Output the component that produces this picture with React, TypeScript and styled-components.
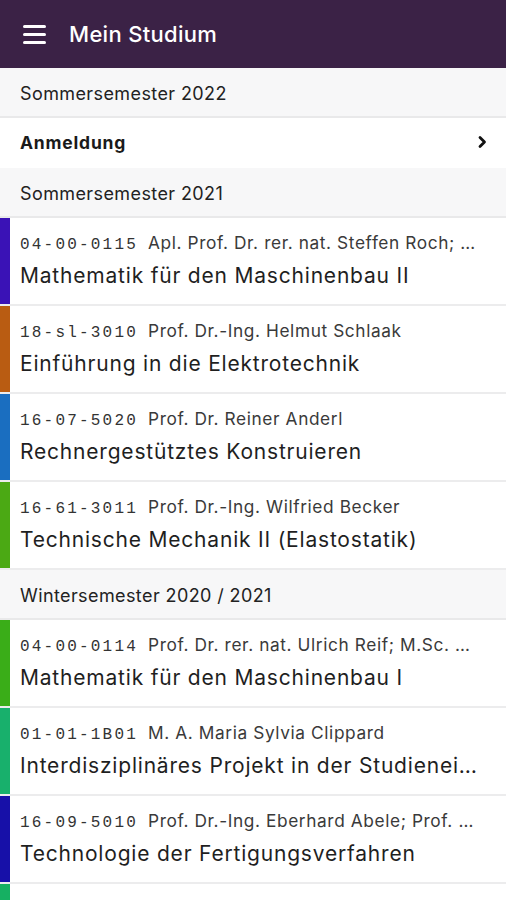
import React from "react";
import styled, { createGlobalStyle } from "styled-components";

const Global = createGlobalStyle`
  html, body { margin: 0; padding: 0; background: #ffffff; }
  body { font-family: Inter, "Noto Sans", sans-serif; -webkit-font-smoothing: antialiased; }
`;

const Page = styled.div`
  width: 506px;
  height: 900px;
  overflow: hidden;
  background: #ffffff;
`;

const Header = styled.header`
  height: 68px;
  background: #3b2246;
  display: flex;
  align-items: center;
  padding-left: 23px;
  gap: 23px;
  box-sizing: border-box;
`;

const Burger = styled.div`
  width: 23px;
  display: flex;
  flex-direction: column;
  gap: 5px;
  span {
    display: block;
    height: 3px;
    border-radius: 1.5px;
    background: #ffffff;
  }
`;

const Title = styled.h1`
  margin: 0;
  color: #ffffff;
  font-size: 22px;
  font-weight: 500;
  letter-spacing: 0.3px;
`;

const SectionHeader = styled.div`
  height: 50px;
  background: #f7f7f8;
  border-bottom: 2px solid #e9e9ea;
  display: flex;
  align-items: center;
  padding-left: 20px;
  font-size: 18px;
  letter-spacing: 0.4px;
  color: #222;
  box-sizing: border-box;
  padding-top: 2px;
`;

const LinkRow = styled.div`
  height: 50px;
  display: flex;
  align-items: center;
  justify-content: space-between;
  padding: 0 19px 2px 20px;
  font-size: 17.5px;
  letter-spacing: 0.8px;
  font-weight: 700;
  color: #1a1a1a;
  box-sizing: border-box;
  background: #fff;
`;

const Row = styled.div`
  display: flex;
  height: 88px;
  border-bottom: 2px solid #ececed;
  box-sizing: border-box;
`;

const Stripe = styled.div<{ $color: string }>`
  width: 10px;
  flex: none;
  background: ${(p) => p.$color};
`;

const Content = styled.div`
  flex: 1;
  min-width: 0;
  padding: 14px 20px 0 10px;
  display: flex;
  flex-direction: column;
  gap: 9px;
`;

const Meta = styled.div`
  display: flex;
  align-items: baseline;
  gap: 10px;
  white-space: nowrap;
  overflow: hidden;
  padding-right: 10px;
`;

const Code = styled.span`
  font-family: "Liberation Mono", monospace;
  font-size: 16px;
  letter-spacing: 2.2px;
  color: #333;
  flex: none;
`;

const Lecturer = styled.span`
  font-size: 17.3px;
  letter-spacing: 0.6px;
  color: #3a3a3a;
  overflow: hidden;
  text-overflow: ellipsis;
  min-width: 0;
`;

const CourseTitle = styled.div`
  font-size: 21px;
  color: #1f1f1f;
  white-space: nowrap;
  overflow: hidden;
  text-overflow: ellipsis;
  letter-spacing: 0.8px;
`;

type Course = { color: string; code: string; lecturer: string; title: string };

const ss21: Course[] = [
  { color: "#3a12b6", code: "04-00-0115", lecturer: "Apl. Prof. Dr. rer. nat. Steffen Roch; Prof. Dr.", title: "Mathematik für den Maschinenbau II" },
  { color: "#b95c12", code: "18-sl-3010", lecturer: "Prof. Dr.-Ing. Helmut Schlaak", title: "Einführung in die Elektrotechnik" },
  { color: "#1a6ec0", code: "16-07-5020", lecturer: "Prof. Dr. Reiner Anderl", title: "Rechnergestütztes Konstruieren" },
  { color: "#4ba914", code: "16-61-3011", lecturer: "Prof. Dr.-Ing. Wilfried Becker", title: "Technische Mechanik II (Elastostatik)" },
];

const ws20: Course[] = [
  { color: "#3aad18", code: "04-00-0114", lecturer: "Prof. Dr. rer. nat. Ulrich Reif; M.Sc. Thomas", title: "Mathematik für den Maschinenbau I" },
  { color: "#18b06c", code: "01-01-1B01", lecturer: "M. A. Maria Sylvia Clippard", title: "Interdisziplinäres Projekt in der Studieneingangsphase" },
  { color: "#1710a8", code: "16-09-5010", lecturer: "Prof. Dr.-Ing. Eberhard Abele; Prof. Dr.-Ing.", title: "Technologie der Fertigungsverfahren" },
  { color: "#16b062", code: "16-14-5010", lecturer: "Prof. Dr.-Ing. Peter Pelz", title: "Technische Thermodynamik I" },
];

const CourseRow = ({ c }: { c: Course }) => (
  <Row>
    <Stripe $color={c.color} />
    <Content>
      <Meta>
        <Code>{c.code}</Code>
        <Lecturer>{c.lecturer}</Lecturer>
      </Meta>
      <CourseTitle>{c.title}</CourseTitle>
    </Content>
  </Row>
);

export default function App() {
  return (
    <Page>
      <Global />
      <Header>
        <Burger>
          <span />
          <span />
          <span />
        </Burger>
        <Title>Mein Studium</Title>
      </Header>
      <SectionHeader>Sommersemester 2022</SectionHeader>
      <LinkRow>
        <span>Anmeldung</span>
        <svg width="10" height="14" viewBox="0 0 10 14">
          <path d="M3 2.5 L7.5 7 L3 11.5" fill="none" stroke="#111" strokeWidth="2.8" strokeLinecap="round" strokeLinejoin="round" />
        </svg>
      </LinkRow>
      <SectionHeader>Sommersemester 2021</SectionHeader>
      {ss21.map((c) => (
        <CourseRow key={c.code} c={c} />
      ))}
      <SectionHeader>Wintersemester 2020 / 2021</SectionHeader>
      {ws20.map((c) => (
        <CourseRow key={c.code} c={c} />
      ))}
    </Page>
  );
}
